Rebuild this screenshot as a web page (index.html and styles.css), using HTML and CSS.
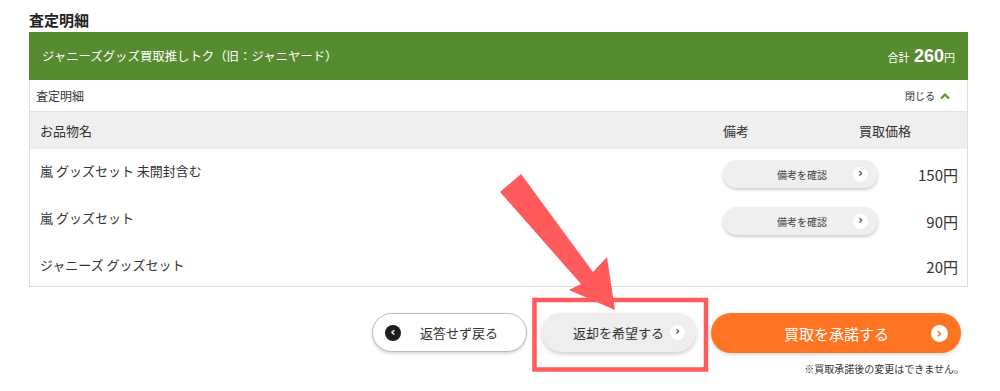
FILE: index.html
```html
<!DOCTYPE html>
<html>
<head>
  <meta charset="utf-8" />
  <title>査定明細</title>
  <link rel="stylesheet" href="styles.css">
</head>
<body>
  <div class="page">
    <h2 class="page-title">査定明細</h2>

    <div class="summary">
      <span class="shop">ジャニーズグッズ買取推しトク（旧：ジャニヤード）</span>
      <span class="total">合計 <b>260</b>円</span>
    </div>

    <div class="detail-box">
      <div class="detail-bar">
        <span>査定明細</span>
        <span class="toggle">閉じる
          <svg width="10" height="8" viewBox="0 0 10 8"><path d="M1 6.5 L5 2.5 L9 6.5" fill="none" stroke="#4f9a2e" stroke-width="2.2"/></svg>
        </span>
      </div>

      <div class="row head">
        <span class="col-name">お品物名</span>
        <span class="col-note">備考</span>
        <span class="col-price">買取価格</span>
      </div>

      <div class="row item">
        <span class="col-name">嵐 グッズセット 未開封含む</span>
        <span class="col-note"><button class="note-btn">備考を確認<i class="dot">›</i></button></span>
        <span class="col-price">150円</span>
      </div>
      <div class="row item">
        <span class="col-name">嵐 グッズセット</span>
        <span class="col-note"><button class="note-btn">備考を確認<i class="dot">›</i></button></span>
        <span class="col-price">90円</span>
      </div>
      <div class="row item last">
        <span class="col-name">ジャニーズ グッズセット</span>
        <span class="col-note"></span>
        <span class="col-price">20円</span>
      </div>
    </div>

    <div class="actions">
      <button class="btn btn-back"><i class="dot dark">‹</i>返答せず戻る</button>
      <button class="btn btn-return">返却を希望する<i class="dot">›</i></button>
      <button class="btn btn-accept">買取を承諾する<i class="dot">›</i></button>
    </div>
    <p class="notice">※買取承諾後の変更はできません。</p>

    <svg class="markup" width="1000" height="391" viewBox="0 0 1000 391">
      <rect x="534.5" y="300" width="171.5" height="69.5" fill="none" stroke="#ff5a5c" stroke-width="4.5"/>
      <polygon points="500,192 521,174 593,272 607,257 615,310 569,290 581,284" fill="#ff5a5c"/>
    </svg>
  </div>
</body>
</html>
```

FILE: styles.css
```css
* {
  margin: 0;
  padding: 0;
  box-sizing: border-box;
}

body {
  font-family: "Noto Sans CJK JP", "Noto Sans", sans-serif;
  color: #333;
  background: #fff;
}

.page {
  position: relative;
  width: 1000px;
  height: 391px;
  padding: 11px 32px 0 29px;
}

.page-title {
  font-size: 15px;
  font-weight: 700;
  line-height: 18px;
  margin-bottom: 3px;
  color: #222;
}

.summary {
  height: 48px;
  background: #578b30;
  color: #fff;
  display: flex;
  align-items: center;
  justify-content: space-between;
  padding: 0 13px 0 13px;
  font-size: 12.4px;
}

.total {
  font-size: 11px;
}

.total b {
  font-family: "Liberation Sans", Arial, sans-serif;
  font-size: 18px;
  margin-left: 2px;
}

.detail-box {
  border: 1px solid #ddd;
  border-top: none;
}

.detail-bar {
  height: 32px;
  display: flex;
  align-items: center;
  justify-content: space-between;
  padding: 0 17px 0 6px;
  font-size: 12px;
  border-bottom: 1px solid #e3e3e3;
}

.toggle {
  font-size: 10px;
  display: flex;
  align-items: center;
  gap: 5px;
}

.row {
  display: flex;
  align-items: center;
  padding-left: 10px;
  font-size: 13px;
}

.row.head {
  height: 37px;
  background: #efefef;
}

.row.item {
  height: 47px;
}

.row.last {
  height: 43px;
}

.col-name {
  flex: 1;
}

.item .col-name {
  padding-bottom: 5px;
}

.last .col-name {
  padding-bottom: 1px;
}

.head .col-note {
  width: 136px;
}

.head .col-price {
  width: 108px;
}

.item .col-note {
  width: 155px;
  display: flex;
  padding-top: 3px;
}

.item .col-price {
  width: 89px;
  text-align: right;
  padding-right: 9px;
  padding-top: 3px;
  font-size: 15px;
  font-family: "Noto Sans CJK JP", sans-serif;
}

.note-btn {
  width: 155px;
  height: 28px;
  border: none;
  border-radius: 14px;
  background: #efefef;
  box-shadow: 0 2px 3px rgba(0, 0, 0, 0.18);
  font-family: inherit;
  font-size: 10px;
  color: #444;
  display: flex;
  align-items: center;
  justify-content: flex-end;
  padding-right: 10px;
  gap: 26px;
}

.dot {
  width: 15px;
  height: 15px;
  border-radius: 50%;
  background: #fff;
  color: #555;
  font-style: normal;
  font-family: "DejaVu Sans", sans-serif;
  font-weight: 700;
  font-size: 12px;
  line-height: 13px;
  text-align: center;
  display: inline-block;
}

.actions {
  display: flex;
  justify-content: flex-end;
  gap: 15px;
  margin-top: 26px;
  padding-right: 7px;
}

.btn {
  height: 39px;
  border-radius: 20px;
  font-family: inherit;
  font-size: 13px;
  color: #333;
  display: flex;
  align-items: center;
}

.btn-back {
  width: 155px;
  background: #fff;
  border: 1px solid #bbb;
  box-shadow: 0 2px 3px rgba(0, 0, 0, 0.15);
  padding-left: 12px;
  gap: 19px;
}

.dot.dark {
  background: #1d1d1d;
  color: #fff;
  width: 16px;
  height: 16px;
  line-height: 15px;
}

.btn-return {
  width: 154px;
  background: #eee;
  border: none;
  box-shadow: 0 2px 4px rgba(0, 0, 0, 0.2);
  justify-content: flex-end;
  padding-right: 11px;
  gap: 6px;
}

.btn-accept {
  width: 250px;
  height: 40px;
  background: #ff7422;
  border: none;
  color: #fff;
  font-size: 15px;
  box-shadow: 0 2px 4px rgba(0, 0, 0, 0.15);
  justify-content: flex-end;
  padding-right: 13px;
  gap: 42px;
}

.btn-accept .dot {
  width: 17px;
  height: 17px;
  color: #ff7422;
  font-size: 14px;
  line-height: 16px;
}

.notice {
  text-align: right;
  font-size: 10px;
  margin-top: 8px;
  padding-right: 4px;
  color: #333;
}

.markup {
  position: absolute;
  top: 0;
  left: 0;
  pointer-events: none;
}
```
